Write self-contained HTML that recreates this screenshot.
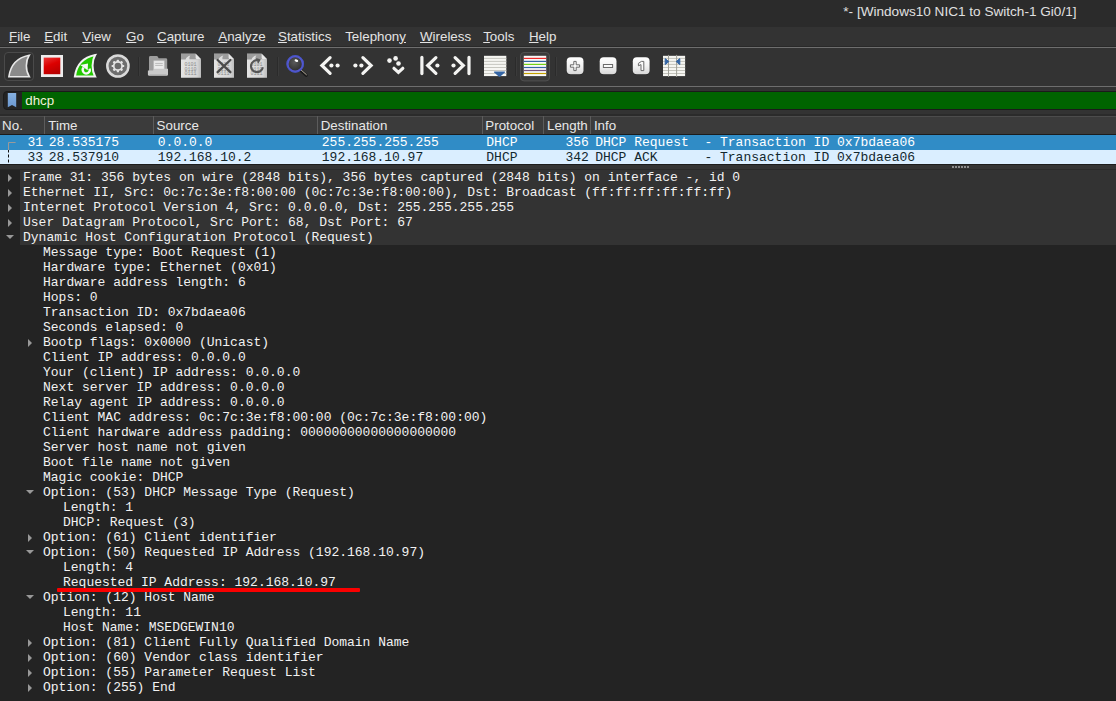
<!DOCTYPE html>
<html><head><meta charset="utf-8"><title>Wireshark</title>
<style>
*{box-sizing:border-box;margin:0;padding:0}
html,body{width:1116px;height:701px;overflow:hidden;background:#232323}
body{position:relative;font-family:"Liberation Sans","DejaVu Sans",sans-serif;color:#e8e8e8;font-size:13.5px}
#title{position:absolute;left:0;top:0;width:1116px;height:27px;background:#2b2b2b}
#title span{position:absolute;left:843.3px;top:3.5px;font-size:13.58px;color:#e0e0e0;white-space:nowrap}
#menu{position:absolute;left:0;top:27px;width:1116px;height:19px;background:#333333}
#menu span{position:absolute;top:2px;font-size:13.33px;color:#e4e4e4;white-space:nowrap}
#menu u{text-decoration:underline;text-underline-offset:1px;text-decoration-thickness:1px}
#tbar{position:absolute;left:0;top:48px;width:1116px;height:38px;background:#333333}
.ln{position:absolute;left:0;width:1116px;height:1px}
#fbar{position:absolute;left:0;top:87px;width:1116px;height:29px;background:#333333}
#fbox{position:absolute;left:3px;top:4px;width:1120px;height:19px;background:#232323;border:1px solid #1b1b1b;border-radius:4px}
#fgreen{position:absolute;left:18px;top:0;right:0;height:17px;background:#006400}
#fgreen span{position:absolute;left:3.3px;top:0.5px;font-size:13.33px;color:#f0f0dc}
#hdr{position:absolute;left:0;top:116px;width:1116px;height:18px;background:#3b3b3b;border-top:1px solid #4c4c4c}
#hdr span{position:absolute;top:1px;font-size:13.33px;color:#e8e8e8}
#hdr i{position:absolute;top:-1px;width:1px;height:18px;background:#5c5c5c}
#plist{position:absolute;left:0;top:134px;width:1116px;height:31px;background:#1c1c1c;font-family:"Liberation Mono",monospace;font-size:13px}
.pr{position:absolute;left:0;width:1116px;height:15px;line-height:15px;white-space:pre}
.pr span{position:absolute;top:0}
#r1{top:1px;background:#308cc6;color:#fff}
#r2{top:16px;height:14px;background:#daeeff;color:#12272e}
#split{position:absolute;left:0;top:165px;width:1116px;height:4px;background:#343434}
#split i{position:absolute;top:1px;width:2px;height:2px;background:#8c8c8c}
#tree{position:absolute;left:0;top:169px;width:1116px;height:532px;background:#232323;border-top:1px solid #2a2a2a;font-family:"Liberation Mono",monospace;font-size:13px;color:#f2f2f2}
.row{position:relative;height:15px;line-height:15px;white-space:pre;letter-spacing:-0.006px}
.row span{position:absolute;top:0}
.l0 span{left:23px}.l1 span{left:43px}.l2 span{left:63px}
.l0::before{content:"";position:absolute;left:20px;top:0;right:0;height:15px;background:#333333}
.ar{position:absolute;top:3.8px;width:0;height:0;border-left:4.7px solid #989898;border-top:4px solid transparent;border-bottom:4px solid transparent}
.ad{position:absolute;top:5.2px;width:0;height:0;border-top:4.7px solid #989898;border-left:4.3px solid transparent;border-right:4.3px solid transparent}
.l0 .ar{left:7.8px}.l1 .ar{left:27.8px}
.l0 .ad{left:5.9px}.l1 .ad{left:25.9px}
#red{position:absolute;left:56.5px;top:588.4px;width:303px;height:3.2px;background:#fa0000;border-radius:1px}
</style></head><body>
<div id="title"><span>*- [Windows10 NIC1 to Switch-1 Gi0/1]</span></div>
<div id="menu">
<span style="left:9.0px"><u>F</u>ile</span>
<span style="left:44.2px"><u>E</u>dit</span>
<span style="left:82.3px"><u>V</u>iew</span>
<span style="left:126.0px"><u>G</u>o</span>
<span style="left:157.0px"><u>C</u>apture</span>
<span style="left:218.3px"><u>A</u>nalyze</span>
<span style="left:278.0px"><u>S</u>tatistics</span>
<span style="left:345.2px">Telephon<u>y</u></span>
<span style="left:420.0px"><u>W</u>ireless</span>
<span style="left:483.2px"><u>T</u>ools</span>
<span style="left:528.9px"><u>H</u>elp</span>
</div>
<div class="ln" style="top:46px;background:#292929"></div><div class="ln" style="top:47px;background:#6e6e6e"></div><div class="ln" style="top:85px;background:#292929"></div><div class="ln" style="top:86px;background:#6e6e6e"></div>
<div id="tbar"><svg width="1116" height="38" viewBox="0 48 1116 38" style="position:absolute;left:0;top:0">
<defs>
<linearGradient id="gred" x1="0.2" y1="0" x2="0.6" y2="1"><stop offset="0" stop-color="#e83030"/><stop offset="0.45" stop-color="#dc0000"/><stop offset="1" stop-color="#b80000"/></linearGradient>
<linearGradient id="gbtn" x1="0" y1="0" x2="0" y2="1"><stop offset="0" stop-color="#ffffff"/><stop offset="0.5" stop-color="#f2f2f2"/><stop offset="1" stop-color="#d8d8d8"/></linearGradient>
<radialGradient id="glens" cx="0.45" cy="0.4" r="0.6"><stop offset="0" stop-color="#5a5a5a"/><stop offset="1" stop-color="#2c2c2c"/></radialGradient>
<linearGradient id="gdoc" x1="0" y1="0" x2="1" y2="0"><stop offset="0" stop-color="#e4e4e4"/><stop offset="0.8" stop-color="#d6d6d6"/><stop offset="1" stop-color="#bcbcbc"/></linearGradient>
</defs>
<!-- start capture (fin, framed) -->
<rect x="4.5" y="52.5" width="29" height="28" rx="3.5" fill="#2f2f2f" stroke="#4a4a4a"/>
<path d="M8.9 76.7 C10.7 63.4 18.6 57.4 29.2 55.3 C25.6 61 25.2 70 29.3 76.7 Z" fill="#8a8a8a" stroke="#e8e8e8" stroke-width="1.6" stroke-linejoin="miter"/>
<!-- stop -->
<rect x="41" y="55" width="22" height="22" fill="#eeeeee"/>
<rect x="43.7" y="57.6" width="16.6" height="16.6" fill="url(#gred)"/>
<!-- restart -->
<path d="M74.9 76.5 C76.7 63.2 84.6 57.2 95.2 55.1 C91.8 60.8 91.6 69.8 95.1 76.5 Z" fill="#22c800" stroke="#f2f2f2" stroke-width="2" stroke-linejoin="miter"/>
<path d="M89.5 68.6 A3.5 3.5 0 1 1 83.6 67.6" fill="none" stroke="#f8f8f8" stroke-width="2.3"/>
<path d="M80.3 65 L88 63.5 L87.7 70.2 Z" fill="#f8f8f8"/>
<!-- options gear -->
<circle cx="117.9" cy="66" r="10.6" fill="#6e6e6e" stroke="#dadada" stroke-width="2.5"/>
<g transform="translate(117.9 66)">
<g fill="#e4e4e4">
<circle r="5"/>
<rect x="-1.1" y="-6.3" width="2.2" height="12.6" rx="0.5"/>
<rect x="-1.1" y="-6.3" width="2.2" height="12.6" rx="0.5" transform="rotate(45)"/>
<rect x="-1.1" y="-6.3" width="2.2" height="12.6" rx="0.5" transform="rotate(90)"/>
<rect x="-1.1" y="-6.3" width="2.2" height="12.6" rx="0.5" transform="rotate(135)"/>
</g>
<circle r="3.3" fill="#6c6c6c"/>
</g>
<!-- separators -->
<rect x="138.0" y="57" width="1" height="19" fill="#2b2b2b"/><rect x="139.0" y="57" width="1" height="19" fill="#3b3b3b"/>
<rect x="277.0" y="57" width="1" height="19" fill="#2b2b2b"/><rect x="278.0" y="57" width="1" height="19" fill="#3b3b3b"/>
<rect x="515" y="57" width="1" height="19" fill="#2b2b2b"/><rect x="516" y="57" width="1" height="19" fill="#3b3b3b"/>
<rect x="555" y="57" width="1" height="19" fill="#2b2b2b"/><rect x="556" y="57" width="1" height="19" fill="#3b3b3b"/>
<!-- open folder -->
<path d="M149 57.4 Q149 56 150.4 56 H156.6 Q157.6 56 158 57 L158.6 58.2 H165.8 Q167.2 58.2 167.2 59.6 V72 H149 Z" fill="#9e9e9e"/>
<rect x="153.8" y="60.8" width="10.4" height="9" fill="#ececec" stroke="#c4c4c4" stroke-width="0.6"/>
<path d="M155.2 63.4 H162.8 M155.2 65.4 H162.8" stroke="#b4b4b4" stroke-width="0.9"/>
<path d="M147.9 70.6 H153 L154.6 68.8 H168 V74.4 Q168 75.8 166.6 75.8 H149.3 Q147.9 75.8 147.9 74.4 Z" fill="#c9c9c9"/>
<path d="M149.6 74.6 H166.4" stroke="#b6b6b6" stroke-width="1"/>
<!-- save / file -->
<g transform="translate(181 53.8)">
<path d="M0 0 H14.6 L20 5.4 V24 H0 Z" fill="url(#gdoc)"/>
<path d="M0 0 H14.6 L20 5.4 H8.5 C8.2 3.6 8.6 2.6 9.4 1.6 C7 2 5.2 3.6 4.6 5.6 H0 Z" fill="#9c9c9c"/>
<path d="M14.6 0 L20 5.4 H16 Q14.6 5.4 14.6 4 Z" fill="#e8e8e8"/>
<g font-family="Liberation Mono, monospace" font-size="5" fill="#8c8c8c"><text x="3.4" y="12.2">0101</text><text x="3.4" y="16.8">0110</text><text x="3.4" y="21.4">0111</text></g>
</g>
<!-- close -->
<g transform="translate(214 53.8)">
<path d="M0 0 H14.6 L20 5.4 V24 H0 Z" fill="url(#gdoc)"/>
<path d="M0 0 H14.6 L20 5.4 H8.5 C8.2 3.6 8.6 2.6 9.4 1.6 C7 2 5.2 3.6 4.6 5.6 H0 Z" fill="#9c9c9c"/>
<path d="M14.6 0 L20 5.4 H16 Q14.6 5.4 14.6 4 Z" fill="#e8e8e8"/>
<g font-family="Liberation Mono, monospace" font-size="5" fill="#8c8c8c"><text x="3.4" y="12.2">0101</text><text x="3.4" y="16.8">0110</text><text x="3.4" y="21.4">0111</text></g>
</g>
<path d="M217.6 60 L230.4 72.2 M230.4 60 L217.6 72.2" stroke="#4c4c4c" stroke-width="2.3" stroke-linecap="round"/>
<!-- reload -->
<g transform="translate(247 53.8)">
<path d="M0 0 H14.6 L20 5.4 V24 H0 Z" fill="url(#gdoc)"/>
<path d="M0 0 H14.6 L20 5.4 H8.5 C8.2 3.6 8.6 2.6 9.4 1.6 C7 2 5.2 3.6 4.6 5.6 H0 Z" fill="#9c9c9c"/>
<path d="M14.6 0 L20 5.4 H16 Q14.6 5.4 14.6 4 Z" fill="#e8e8e8"/>
<g font-family="Liberation Mono, monospace" font-size="5" fill="#8c8c8c"><text x="3.4" y="12.2">0101</text><text x="3.4" y="16.8">0110</text><text x="3.4" y="21.4">0111</text></g>
</g>
<path d="M262.9 67.3 A6 6 0 1 1 258.4 60.3" fill="none" stroke="#565656" stroke-width="2.1"/>
<path d="M257 57.4 L261 60.4 L257 63.4 Z" fill="#565656" transform="rotate(-20 258.5 60.4)"/>
<!-- find -->
<path d="M300.6 70.4 L306.2 75.4" stroke="#1a1a1a" stroke-width="3" stroke-linecap="round"/>
<path d="M301 69.9 L306.4 74.7" stroke="#b8b0a0" stroke-width="1" stroke-linecap="round"/>
<circle cx="295.2" cy="63.9" r="7.7" fill="url(#glens)" stroke="#5558d0" stroke-width="2.2"/>
<circle cx="295.2" cy="63.9" r="8.4" fill="none" stroke="#3c50c0" stroke-width="0.8" opacity="0.8"/>
<ellipse cx="296.4" cy="60.6" rx="1.9" ry="1.1" fill="#ffffff" transform="rotate(20 296.4 60.6)"/>
<!-- back -->
<g fill="none" stroke="#f4f4f2" stroke-width="3.2" stroke-linecap="round" stroke-linejoin="miter">
<path d="M330.1 57.6 L321.9 65.5 L330.1 73.4"/>
<path d="M362.9 57.6 L371.1 65.5 L362.9 73.4"/>
<path d="M394 68.3 L398.4 72.4 L402.8 68.3"/>
<path d="M421.9 57.4 V73.6"/>
<path d="M435.9 57.6 L427.7 65.5 L435.9 73.4"/>
<path d="M455.1 57.6 L463.3 65.5 L455.1 73.4"/>
<path d="M469 57.4 V73.6"/>
</g>
<g fill="#f4f4f2">
<circle cx="331.4" cy="65.5" r="2.1"/><circle cx="337.6" cy="65.5" r="2.1"/>
<circle cx="355.4" cy="65.5" r="2.1"/><circle cx="361.4" cy="65.5" r="2.1"/>
<circle cx="389.5" cy="60.6" r="2.3"/><circle cx="395.6" cy="58.4" r="2.3"/><circle cx="398.5" cy="63.5" r="2.3"/>
<circle cx="437.4" cy="65.5" r="2.1"/>
<circle cx="453.5" cy="65.5" r="2.1"/>
</g>
<!-- autoscroll -->
<rect x="484" y="55.8" width="22.3" height="20.3" fill="#f6f6f2"/>
<path d="M484 58.4 H506.3 M484 61.4 H506.3 M484 64.4 H506.3 M484 67.5 H506.3 M484 70.5 H506.3 M484 73.5 H506.3" stroke="#c2c2ba" stroke-width="0.9"/>
<path d="M494.6 71.6 H504.4 Q505.6 71.6 504.8 72.6 L500.3 76.6 Q499.5 77.2 498.7 76.6 L494.2 72.6 Q493.4 71.6 494.6 71.6 Z" fill="#3465a4"/>
<!-- colorize framed -->
<rect x="520.5" y="52.5" width="29" height="28.4" rx="3.5" fill="#3b3b3b" stroke="#505050"/>
<rect x="523.8" y="55.8" width="22.4" height="20.3" fill="#f8f8f8"/>
<g stroke-width="1.2">
<path d="M523.8 58.4 H546.2" stroke="#ef2929"/>
<path d="M523.8 61.4 H546.2" stroke="#3465a4"/>
<path d="M523.8 64.4 H546.2" stroke="#73d216"/>
<path d="M523.8 67.5 H546.2" stroke="#3465a4"/>
<path d="M523.8 70.5 H546.2" stroke="#75507b"/>
<path d="M523.8 73.5 H546.2" stroke="#c4a000"/>
</g>
<!-- zoom in -->
<rect x="566.7" y="57.9" width="16.8" height="17" rx="4" fill="#1c1c1c" opacity="0.7"/><rect x="566.7" y="57.2" width="16.8" height="17" rx="4" fill="url(#gbtn)"/>
<path d="M573.8 61.4 H576.2 V64.8 H579.6 V67.2 H576.2 V70.6 H573.8 V67.2 H570.4 V64.8 H573.8 Z" fill="#fafafa" stroke="#6a6a6a" stroke-width="1"/>
<!-- zoom out -->
<rect x="599.7" y="57.9" width="16.8" height="17" rx="4" fill="#1c1c1c" opacity="0.7"/><rect x="599.7" y="57.2" width="16.8" height="17" rx="4" fill="url(#gbtn)"/>
<rect x="603.4" y="64.5" width="9.2" height="3" fill="#fafafa" stroke="#6a6a6a" stroke-width="1"/>
<!-- zoom 1 -->
<rect x="632.8" y="57.9" width="16.8" height="17" rx="4" fill="#1c1c1c" opacity="0.7"/><rect x="632.8" y="57.2" width="16.8" height="17" rx="4" fill="url(#gbtn)"/>
<path d="M638.4 63.4 L641.4 61.4 H643.8 V70.6 H641 V64.6 L638.4 65.8 Z" fill="#fafafa" stroke="#6a6a6a" stroke-width="1"/>
<!-- resize columns -->
<rect x="663" y="55.8" width="22.1" height="20.3" fill="#f6f6f2"/>
<path d="M663 58.4 H685.1 M663 61.4 H685.1 M663 64.4 H685.1 M663 67.5 H685.1 M663 70.5 H685.1 M663 73.5 H685.1" stroke="#c4c4bc" stroke-width="1"/>
<path d="M668.5 54.9 V76.9 M676.6 54.9 V76.9" stroke="#a0a098" stroke-width="1"/>
<path d="M665.2 58.6 L668.8 61.6 L665.2 64.6 Z" fill="#3465a4" stroke="#3465a4" stroke-width="1" stroke-linejoin="round"/>
<path d="M679.8 58.6 L676.2 61.6 L679.8 64.6 Z" fill="#3465a4" stroke="#3465a4" stroke-width="1" stroke-linejoin="round"/>
</svg>
</div>
<div id="fbar"><div id="fbox"><svg width="10" height="15" viewBox="0 0 10 15" style="position:absolute;left:3px;top:1px"><defs><linearGradient id="gbm" x1="0" y1="0" x2="0" y2="1"><stop offset="0" stop-color="#86b0e0"/><stop offset="1" stop-color="#6b98d0"/></linearGradient></defs><path d="M0.8 0 H9.2 V14.2 L5 11.9 L0.8 14.2 Z" fill="url(#gbm)"/></svg><div id="fgreen"><span>dhcp</span></div></div></div>
<div class="ln" style="top:114px;height:2px;background:#2b2b2b"></div>
<div id="hdr">
<span style="left:2.1px">No.</span>
<span style="left:48.3px">Time</span>
<span style="left:156.6px">Source</span>
<span style="left:320.7px">Destination</span>
<span style="left:485.3px">Protocol</span>
<span style="left:547.0px">Length</span>
<span style="left:593.9px">Info</span>
<i style="left:44px"></i><i style="left:153px"></i><i style="left:317px"></i><i style="left:482px"></i><i style="left:543px"></i><i style="left:590px"></i>
</div>
<div id="plist">
<div class="pr" id="r1"><span style="left:27.5px">31</span><span style="left:48.8px">28.535175</span><span style="left:157.8px">0.0.0.0</span><span style="left:321.8px">255.255.255.255</span><span style="left:486.3px">DHCP</span><span style="left:565.4px">356</span><span style="left:595.2px">DHCP Request  - Transaction ID 0x7bdaea06</span></div>
<div class="pr" id="r2"><span style="left:27.5px">33</span><span style="left:48.8px">28.537910</span><span style="left:157.8px">192.168.10.2</span><span style="left:321.8px">192.168.10.97</span><span style="left:486.3px">DHCP</span><span style="left:565.4px">342</span><span style="left:595.2px">DHCP ACK      - Transaction ID 0x7bdaea06</span></div>
<svg width="20" height="31" viewBox="0 134 20 31" style="position:absolute;left:0;top:0"><path d="M15.6 142.5 H8.5 V150" fill="none" stroke="#9a9a9a" stroke-width="1"/><path d="M8.5 150 V164" fill="none" stroke="#101010" stroke-width="1" stroke-dasharray="3 2" stroke-dashoffset="0.5"/></svg>
</div>
<div id="split"><i style="left:952px"></i><i style="left:955px"></i><i style="left:958px"></i><i style="left:961px"></i><i style="left:964px"></i><i style="left:967px"></i></div>
<div id="tree">
<div class="row l0"><i class="ar"></i><span>Frame 31: 356 bytes on wire (2848 bits), 356 bytes captured (2848 bits) on interface -, id 0</span></div>
<div class="row l0"><i class="ar"></i><span>Ethernet II, Src: 0c:7c:3e:f8:00:00 (0c:7c:3e:f8:00:00), Dst: Broadcast (ff:ff:ff:ff:ff:ff)</span></div>
<div class="row l0"><i class="ar"></i><span>Internet Protocol Version 4, Src: 0.0.0.0, Dst: 255.255.255.255</span></div>
<div class="row l0"><i class="ar"></i><span>User Datagram Protocol, Src Port: 68, Dst Port: 67</span></div>
<div class="row l0"><i class="ad"></i><span>Dynamic Host Configuration Protocol (Request)</span></div>
<div class="row l1"><span>Message type: Boot Request (1)</span></div>
<div class="row l1"><span>Hardware type: Ethernet (0x01)</span></div>
<div class="row l1"><span>Hardware address length: 6</span></div>
<div class="row l1"><span>Hops: 0</span></div>
<div class="row l1"><span>Transaction ID: 0x7bdaea06</span></div>
<div class="row l1"><span>Seconds elapsed: 0</span></div>
<div class="row l1"><i class="ar"></i><span>Bootp flags: 0x0000 (Unicast)</span></div>
<div class="row l1"><span>Client IP address: 0.0.0.0</span></div>
<div class="row l1"><span>Your (client) IP address: 0.0.0.0</span></div>
<div class="row l1"><span>Next server IP address: 0.0.0.0</span></div>
<div class="row l1"><span>Relay agent IP address: 0.0.0.0</span></div>
<div class="row l1"><span>Client MAC address: 0c:7c:3e:f8:00:00 (0c:7c:3e:f8:00:00)</span></div>
<div class="row l1"><span>Client hardware address padding: 00000000000000000000</span></div>
<div class="row l1"><span>Server host name not given</span></div>
<div class="row l1"><span>Boot file name not given</span></div>
<div class="row l1"><span>Magic cookie: DHCP</span></div>
<div class="row l1"><i class="ad"></i><span>Option: (53) DHCP Message Type (Request)</span></div>
<div class="row l2"><span>Length: 1</span></div>
<div class="row l2"><span>DHCP: Request (3)</span></div>
<div class="row l1"><i class="ar"></i><span>Option: (61) Client identifier</span></div>
<div class="row l1"><i class="ad"></i><span>Option: (50) Requested IP Address (192.168.10.97)</span></div>
<div class="row l2"><span>Length: 4</span></div>
<div class="row l2"><span>Requested IP Address: 192.168.10.97</span></div>
<div class="row l1"><i class="ad"></i><span>Option: (12) Host Name</span></div>
<div class="row l2"><span>Length: 11</span></div>
<div class="row l2"><span>Host Name: MSEDGEWIN10</span></div>
<div class="row l1"><i class="ar"></i><span>Option: (81) Client Fully Qualified Domain Name</span></div>
<div class="row l1"><i class="ar"></i><span>Option: (60) Vendor class identifier</span></div>
<div class="row l1"><i class="ar"></i><span>Option: (55) Parameter Request List</span></div>
<div class="row l1"><i class="ar"></i><span>Option: (255) End</span></div>
</div>
<div id="red"></div>
</body></html>
